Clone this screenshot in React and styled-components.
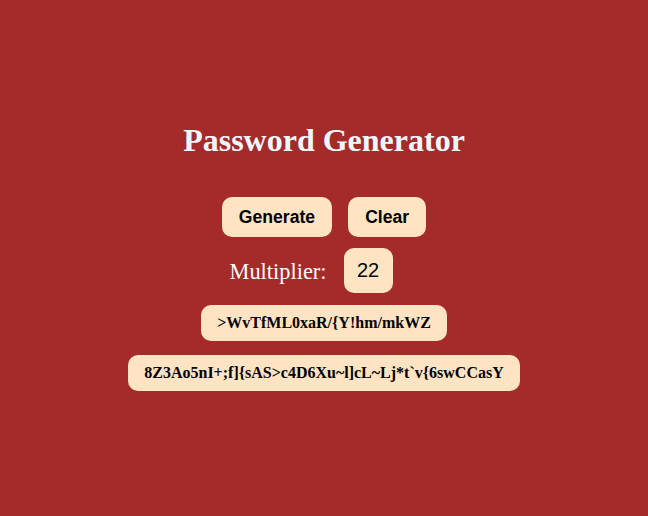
import React, { useState } from "react";
import styled, { createGlobalStyle } from "styled-components";

const GlobalStyle = createGlobalStyle`
  html, body {
    margin: 0;
    padding: 0;
    background: #a52a2a;
  }
`;

const Page = styled.div`
  min-height: 516px;
  display: flex;
  flex-direction: column;
  align-items: center;
  padding-top: 122px;
  box-sizing: border-box;
  font-family: "Liberation Serif", serif;
`;

const Title = styled.h1`
  margin: 0 0 38px;
  font-size: 32px;
  font-weight: bold;
  color: #f0f8ff;
`;

const Buttons = styled.div`
  display: flex;
  gap: 16px;
`;

const Button = styled.button`
  height: 40px;
  padding: 0 17px;
  border: 0;
  border-radius: 10px;
  background: #ffe4c4;
  color: #000;
  font-family: "Liberation Sans", Arial, sans-serif;
  font-size: 17.6px;
  font-weight: bold;
  cursor: pointer;
`;

const MultiplierRow = styled.div`
  display: flex;
  align-items: center;
  gap: 17px;
  margin-top: 11px;
  padding-right: 26px;
`;

const Label = styled.label`
  color: #fff;
  font-size: 22.4px;
  padding-top: 2px;
`;

const Count = styled.input`
  width: 49px;
  height: 45px;
  box-sizing: border-box;
  border: 0;
  border-radius: 10px;
  background: #ffe4c4;
  text-align: center;
  font-family: "Liberation Sans", Arial, sans-serif;
  font-size: 20px;
  color: #000;
  outline: none;
`;

const Passwords = styled.div`
  display: flex;
  flex-direction: column;
  align-items: center;
  gap: 14px;
  margin-top: 12px;
`;

const Password = styled.div`
  height: 36px;
  display: flex;
  align-items: center;
  padding: 0 16px;
  border-radius: 10px;
  background: #ffe4c4;
  color: #000;
  font-size: 16px;
  font-weight: bold;
`;

const App = () => {
  const [count, setCount] = useState("22");
  const passwords = [
    ">WvTfML0xaR/{Y!hm/mkWZ",
    "8Z3Ao5nI+;f]{sAS>c4D6Xu~l]cL~Lj*t`v{6swCCasY",
  ];

  return (
    <>
      <GlobalStyle />
      <Page>
        <Title>Password Generator</Title>
        <Buttons>
          <Button type="button">Generate</Button>
          <Button type="button">Clear</Button>
        </Buttons>
        <MultiplierRow>
          <Label>Multiplier:</Label>
          <Count value={count} onChange={(e) => setCount(e.target.value)} />
        </MultiplierRow>
        <Passwords>
          {passwords.map((p) => (
            <Password key={p}>{p}</Password>
          ))}
        </Passwords>
      </Page>
    </>
  );
};

export default App;
